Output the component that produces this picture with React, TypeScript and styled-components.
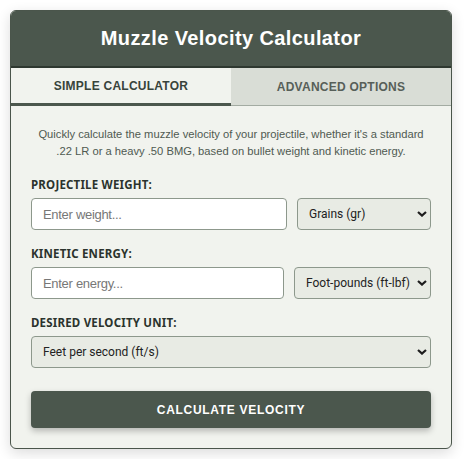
import React, { FC, useState } from 'react';
import styled, { createGlobalStyle } from 'styled-components';

const GlobalStyle = createGlobalStyle`
  body {
    margin: 0;
    background: #ffffff;
    font-family: "Liberation Sans", Arial, sans-serif;
  }
  * {
    box-sizing: border-box;
  }
`;

const UI_FONT = `"Segoe UI", "Noto Sans", sans-serif`;
const SELECT_FONT = `"Segoe UI", Roboto, sans-serif`;

const Card = styled.div`
  width: 442px;
  margin: 10px;
  border: 1px solid #4a554b;
  border-radius: 6px;
  overflow: hidden;
  background: #f1f3ee;
  box-shadow: 0 4px 14px rgba(0, 0, 0, 0.14);
`;

const Header = styled.div`
  height: 57px;
  display: flex;
  align-items: center;
  justify-content: center;
  background: #4b574d;
  border-bottom: 2px solid #2e3830;
`;

const Title = styled.h1`
  margin: 0;
  color: #ffffff;
  font-size: 20px;
  font-weight: bold;
  letter-spacing: 0.4px;
`;

const Tabs = styled.div`
  display: flex;
`;

const Tab = styled.button<{ $active?: boolean }>`
  flex: 1;
  height: 38px;
  border: none;
  margin: 0;
  padding: 0;
  cursor: pointer;
  font-family: "Liberation Sans", Arial, sans-serif;
  font-size: 12px;
  font-weight: bold;
  letter-spacing: 0.25px;
  text-transform: uppercase;
  background: ${(p) => (p.$active ? '#f1f3ee' : '#d9ddd6')};
  color: ${(p) => (p.$active ? '#38433b' : '#575f59')};
  border-bottom: ${(p) => (p.$active ? '3px solid #4b574d' : '1px solid #a3aba2')};
`;

const Body = styled.div`
  padding: 20px 20px 20px;
`;

const Intro = styled.p`
  margin: 0 0 17px;
  text-align: center;
  font-size: 11.2px;
  line-height: 17px;
  color: #4f5a51;
`;

const Field = styled.div`
  margin-bottom: 16px;
`;

const Label = styled.label`
  display: block;
  margin-bottom: 6px;
  font-family: ${UI_FONT};
  font-size: 11.5px;
  line-height: 15px;
  font-weight: bold;
  letter-spacing: 0.2px;
  color: #2b332d;
`;

const Row = styled.div`
  display: flex;
  gap: 10px;
`;

const TextInput = styled.input`
  flex: 1;
  min-width: 0;
  height: 32px;
  padding: 0 11px;
  border: 1px solid #8d988c;
  border-radius: 4px;
  background: #ffffff;
  font-family: "Liberation Sans", Arial, sans-serif;
  font-size: 13px;
  letter-spacing: -0.3px;
  color: #222;
  outline: none;

  &::placeholder {
    color: #777;
  }
`;

const SelectWrap = styled.div<{ $width?: number }>`
  position: relative;
  flex: ${(p) => (p.$width ? `0 0 ${p.$width}px` : '1')};
`;

const Select = styled.select`
  width: 100%;
  height: 32px;
  padding: 0 12px 0 11px;
  border: 1px solid #8d988c;
  border-radius: 4px;
  background: #e8ebe4;
  appearance: none;
  font-family: ${SELECT_FONT};
  font-size: 12px;
  color: #222;
  outline: none;
`;

const Chevron = styled.svg`
  position: absolute;
  right: 4px;
  top: 50%;
  width: 10px;
  height: 6px;
  transform: translateY(-50%);
  pointer-events: none;
`;

const CalcButton = styled.button`
  display: block;
  width: 100%;
  height: 37px;
  margin-top: 23px;
  border: none;
  border-radius: 4px;
  background: #4b574d;
  color: #ffffff;
  font-family: "Liberation Sans", Arial, sans-serif;
  font-size: 12px;
  font-weight: bold;
  letter-spacing: 0.7px;
  text-transform: uppercase;
  box-shadow: 0 3px 6px rgba(0, 0, 0, 0.25);
  cursor: pointer;
`;

const UnitSelect: FC<{ width?: number; options: string[] }> = ({ width, options }) => (
  <SelectWrap $width={width}>
    <Select defaultValue={options[0]}>
      {options.map((o) => (
        <option key={o}>{o}</option>
      ))}
    </Select>
    <Chevron viewBox="0 0 10 6">
      <path d="M1 1 L5 4.6 L9 1" fill="none" stroke="#1e1e1e" strokeWidth="2.2" />
    </Chevron>
  </SelectWrap>
);

const App: FC = () => {
  const [tab, setTab] = useState<'simple' | 'advanced'>('simple');

  return (
    <>
      <GlobalStyle />
      <Card>
        <Header>
          <Title>Muzzle Velocity Calculator</Title>
        </Header>
        <Tabs>
          <Tab $active={tab === 'simple'} onClick={() => setTab('simple')}>
            Simple Calculator
          </Tab>
          <Tab $active={tab === 'advanced'} onClick={() => setTab('advanced')}>
            Advanced Options
          </Tab>
        </Tabs>
        <Body>
          <Intro>
            Quickly calculate the muzzle velocity of your projectile, whether it's a standard
            <br />
            .22 LR or a heavy .50 BMG, based on bullet weight and kinetic energy.
          </Intro>
          <Field>
            <Label>PROJECTILE WEIGHT:</Label>
            <Row>
              <TextInput placeholder="Enter weight..." />
              <UnitSelect width={134} options={['Grains (gr)', 'Grams (g)']} />
            </Row>
          </Field>
          <Field>
            <Label>KINETIC ENERGY:</Label>
            <Row>
              <TextInput placeholder="Enter energy..." />
              <UnitSelect width={137} options={['Foot-pounds (ft-lbf)', 'Joules (J)']} />
            </Row>
          </Field>
          <Field>
            <Label>DESIRED VELOCITY UNIT:</Label>
            <Row>
              <UnitSelect options={['Feet per second (ft/s)', 'Meters per second (m/s)']} />
            </Row>
          </Field>
          <CalcButton>Calculate Velocity</CalcButton>
        </Body>
      </Card>
    </>
  );
};

export default App;
